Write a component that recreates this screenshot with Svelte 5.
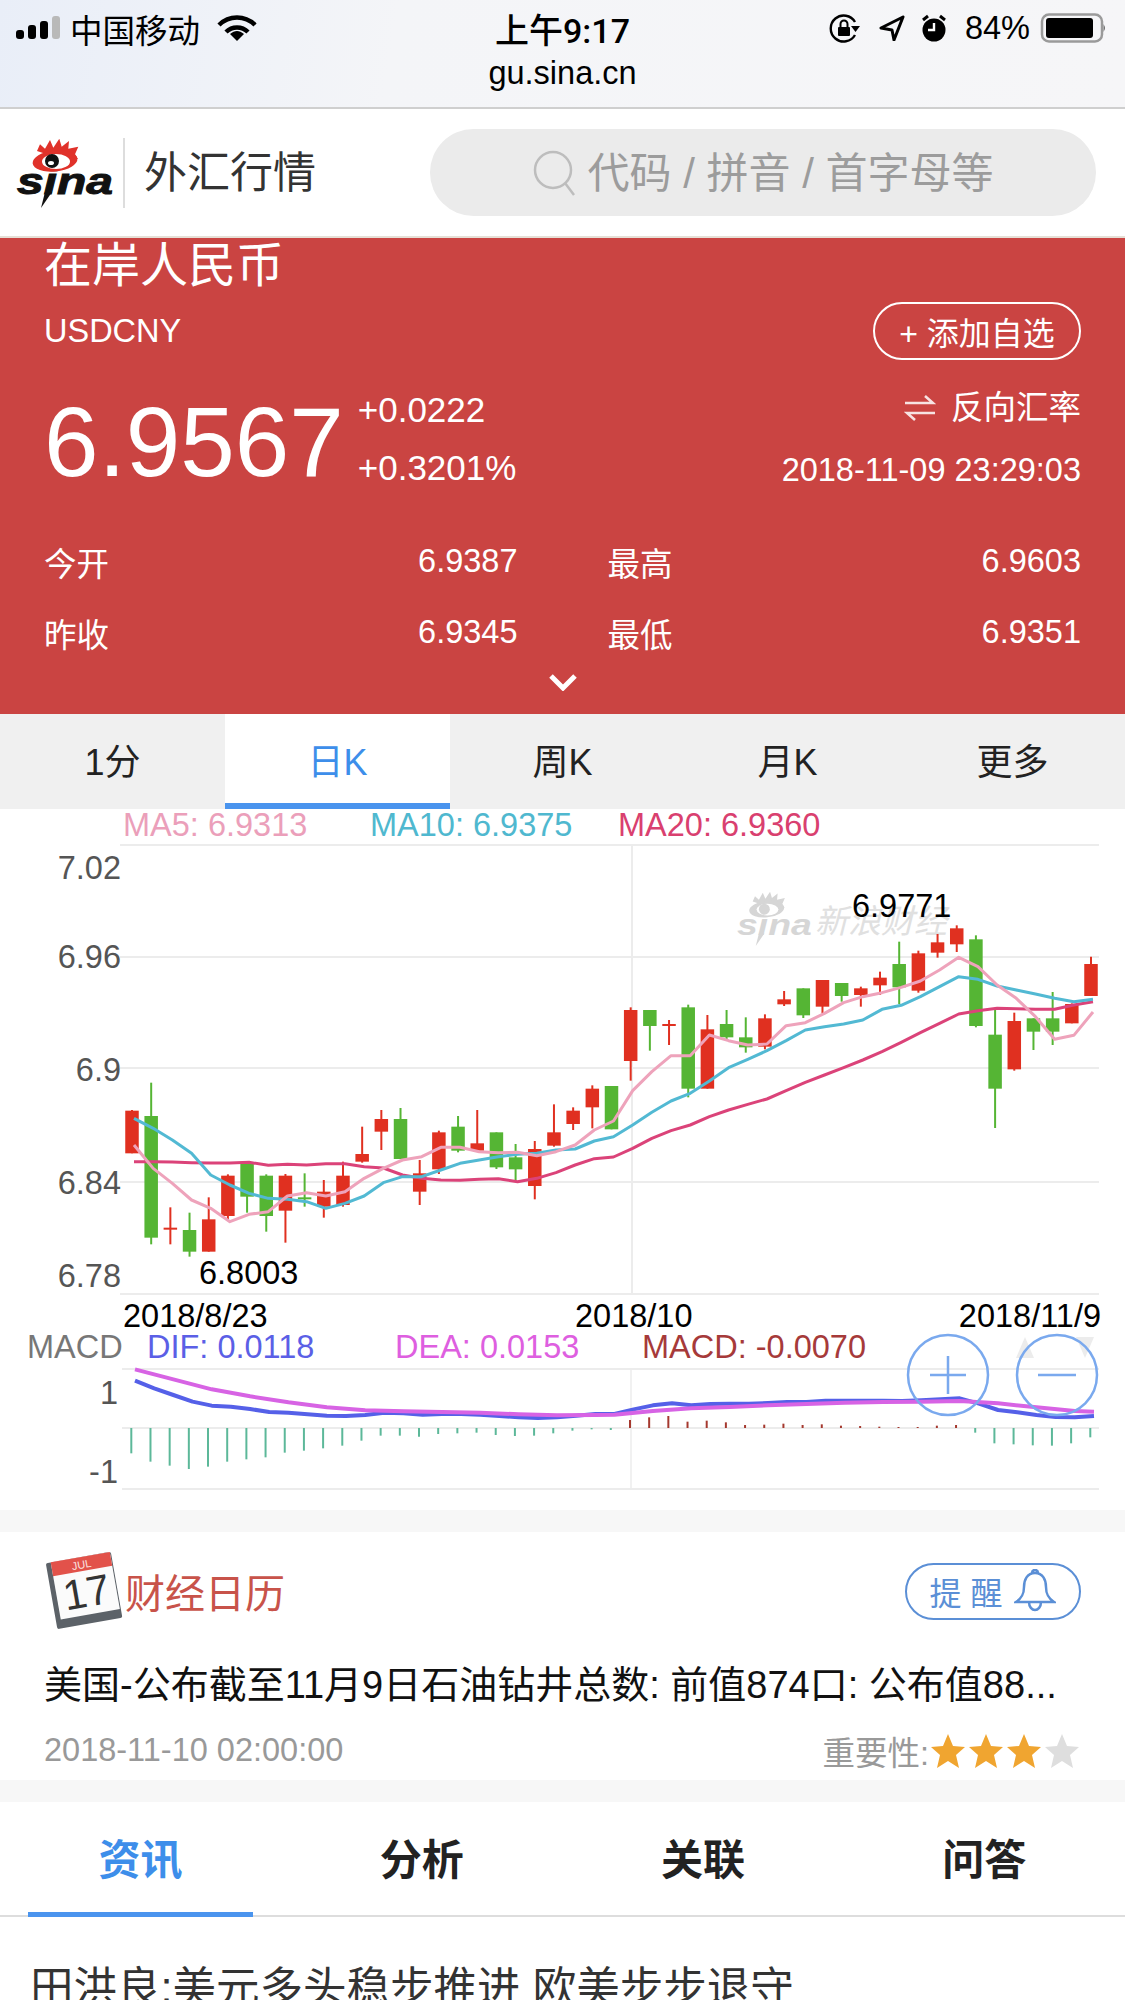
<script>
	// chart data: y values are in third-pixels, counted from the chart origin
	const kTop = 800;
	const macdTop = 1300;
	const x0 = 132;
	const step = 19.18;
	const px = (i) => x0 + step * i;
	const ky = (v) => kTop + v / 3;
	const my = (v) => macdTop + v / 3;

	// high, body top, body bottom, low, up?
	const candles = [
		[930, 932, 1060, 1060, 1], [848, 948, 1313, 1333, 0], [1222, 1283, 1289, 1333, 1], [1238, 1290, 1355, 1370, 0],
		[1192, 1258, 1355, 1355, 1], [1123, 1127, 1248, 1258, 1], [1090, 1092, 1190, 1238, 0], [1123, 1127, 1248, 1295, 0],
		[1122, 1127, 1232, 1328, 1], [1120, 1192, 1197, 1220, 0], [1140, 1175, 1220, 1253, 1], [1085, 1127, 1215, 1220, 1],
		[980, 1062, 1085, 1088, 1], [930, 957, 995, 1050, 1], [924, 957, 1077, 1077, 0], [1080, 1120, 1175, 1215, 1],
		[992, 997, 1108, 1122, 1], [948, 980, 1052, 1057, 0], [930, 1030, 1052, 1052, 1], [997, 997, 1102, 1107, 0],
		[1032, 1072, 1108, 1140, 0], [1023, 1047, 1158, 1198, 1], [913, 997, 1037, 1040, 1], [922, 932, 972, 990, 1],
		[856, 866, 922, 985, 1], [858, 858, 988, 988, 0], [622, 630, 783, 842, 1], [630, 630, 678, 752, 0],
		[660, 672, 678, 735, 1], [614, 622, 866, 892, 0], [645, 688, 866, 866, 1], [630, 672, 712, 722, 0],
		[652, 712, 742, 758, 0], [643, 655, 740, 748, 1], [573, 598, 613, 618, 1], [565, 565, 646, 654, 0],
		[540, 540, 620, 640, 1], [549, 549, 588, 605, 0], [560, 565, 585, 620, 1], [515, 533, 556, 585, 1],
		[425, 492, 562, 612, 0], [452, 460, 572, 578, 1], [402, 427, 458, 473, 1], [376, 385, 433, 456, 1],
		[406, 418, 678, 682, 0], [625, 704, 866, 984, 0], [638, 663, 808, 812, 1], [655, 655, 695, 750, 0],
		[576, 655, 695, 735, 0], [610, 612, 670, 670, 1], [470, 492, 588, 588, 1]
	];

	const ma5 = [1035, 1105, 1150, 1200, 1225, 1265, 1243, 1235, 1188, 1178, 1188, 1175, 1135, 1105, 1080, 1070, 1042, 1042, 1055, 1058, 1057, 1067, 1055, 1035, 990, 963, 872, 815, 767, 767, 705, 722, 735, 732, 677, 668, 640, 608, 590, 578, 562, 543, 510, 472, 500, 555, 595, 650, 718, 706, 636];
	const ma10 = [955, 985, 1020, 1060, 1125, 1155, 1180, 1195, 1198, 1205, 1225, 1210, 1188, 1148, 1130, 1130, 1110, 1090, 1080, 1070, 1063, 1060, 1050, 1047, 1023, 1010, 975, 937, 903, 880, 843, 803, 778, 752, 722, 690, 680, 672, 660, 628, 616, 590, 560, 530, 538, 558, 570, 582, 595, 605, 598];
	const ma20 = [1085, 1085, 1086, 1088, 1089, 1089, 1087, 1096, 1093, 1095, 1091, 1091, 1100, 1104, 1125, 1135, 1140, 1141, 1138, 1136, 1145, 1135, 1118, 1095, 1076, 1071, 1045, 1015, 992, 975, 950, 930, 913, 897, 872, 847, 825, 803, 780, 755, 727, 698, 670, 642, 632, 625, 626, 628, 628, 615, 605];

	const dif = [242, 265, 285, 305, 317, 320, 327, 336, 338, 343, 347, 348, 345, 338, 340, 344, 342, 342, 344, 348, 352, 354, 352, 347, 342, 342, 328, 316, 310, 316, 312, 311, 311, 309, 306, 306, 302, 302, 302, 302, 303, 301, 298, 295, 311, 330, 337, 345, 351, 352, 348];
	const dea = [[0, 208], [2, 238], [4, 268], [6, 289], [8, 307], [10, 322], [12, 331], [14, 334], [16, 336], [18, 338], [20, 343], [22, 346], [24, 345], [25, 344], [27, 333], [29, 325], [31, 321], [33, 316], [35, 312], [37, 308], [39, 306], [41, 305], [43, 303], [45, 310], [47, 322], [49, 333], [50, 335]];
	const macdBars = [460, 485, 497, 507, 500, 485, 478, 472, 458, 452, 445, 437, 422, 407, 407, 410, 402, 400, 398, 405, 408, 407, 400, 392, 388, 390, 360, 352, 348, 365, 362, 367, 375, 374, 371, 375, 373, 377, 378, 380, 381, 381, 377, 375, 398, 430, 433, 436, 437, 430, 412];
	const macdZero = 384;

	const linePoints = (ys) => ys.map((v, i) => `${px(i) + 2},${ky(v)}`).join(' ');
	const difPoints = dif.map((v, i) => `${px(i) + 3},${my(v)}`).join(' ');
	const deaPoints = dea.map(([i, v]) => `${px(i) + 3},${my(v)}`).join(' ');

	const gridY = [845, 957, 1068, 1182, 1294];
	const priceLabels = [['7.02', 868], ['6.96', 957], ['6.9', 1070], ['6.84', 1183], ['6.78', 1276]];
	const periods = ['1分', '日K', '周K', '月K', '更多'];
	const infoTabs = ['资讯', '分析', '关联', '问答'];
	const stats = [
		['今开', '6.9387'], ['最高', '6.9603'],
		['昨收', '6.9345'], ['最低', '6.9351']
	];
	const star = 'M18 1l5 12 12 1-9 8 3 13-11-7-11 7 3-13-9-8 12-1z';
	const flames = 'M22 14L25 7.300L30 11.700L35 3L38.300 10.700L44.300 1.700L46.700 9.700L54 4L53.300 11.700L63.300 9.700L60 17.300L63 22L40 20Z';
</script>

<div class="page">
	<div class="status">
		<div class="status-top">
			<div class="status-left">
				<svg class="signal" width="44" height="24" viewBox="0 0 44 24">
					<rect x="0" y="14" width="8" height="9" rx="3" />
					<rect x="12" y="9" width="8" height="14" rx="3" />
					<rect x="24" y="5" width="8" height="18" rx="3" />
					<rect x="36" y="0" width="8" height="23" rx="3" fill="#b9b9b9" />
				</svg>
				<span>中国移动</span>
				<svg class="wifi" width="42" height="28" viewBox="0 0 42 28">
					<path d="M3 11C13 1 29 1 39 11M10 18C16 12 26 12 32 18" fill="none" stroke="#000" stroke-width="4.5" />
					<path d="M21 27L14 20C19 16 23 16 28 20Z" />
				</svg>
			</div>
			<div class="status-time">上午9:17</div>
			<div class="status-right">
				<svg width="32" height="30" viewBox="0 0 32 30">
					<path d="M26 22A13 13 0 1 1 26 9" fill="none" stroke="#000" stroke-width="2.4" />
					<path d="M22 13h9l-4.500 6z" />
					<rect x="9" y="14" width="12" height="9" rx="1" />
					<path d="M11.500 14v-3a3.500 3.500 0 0 1 7 0v3" fill="none" stroke="#000" stroke-width="2" />
				</svg>
				<svg class="arrow" width="26" height="26" viewBox="0 0 26 26">
					<path d="M24 2L2 13l11 2 2 10z" fill="none" stroke="#000" stroke-width="3" stroke-linejoin="round" />
				</svg>
				<svg class="alarm" width="26" height="28" viewBox="0 0 26 28">
					<circle cx="13" cy="16" r="11.500" />
					<path d="M2 6l5-4M24 6l-5-4" stroke="#000" stroke-width="3" />
					<path d="M13 9v7h-6" fill="none" stroke="#fff" stroke-width="2.400" />
				</svg>
				<span class="battery-pct">84%</span>
				<svg width="66" height="30" viewBox="0 0 66 30">
					<rect x="3" y="1.500" width="60" height="27" rx="7" fill="none" stroke="#9a9a9a" stroke-width="2.500" />
					<rect x="7" y="5" width="47" height="20" rx="3" />
					<path d="M64.500 11l2 4-2 4z" fill="#777" />
				</svg>
			</div>
		</div>
		<div class="status-url">gu.sina.cn</div>
	</div>

	<header class="topbar">
		<svg class="logo" width="102" height="72" viewBox="0 0 102 72">
			<text x="2" y="57" class="logo-text" textLength="96" lengthAdjust="spacingAndGlyphs">sina</text>
			<path d="M30 55h7L26 71z" fill="#111" />
			<path d={flames} fill="#e0322a" />
			<ellipse cx="40" cy="24" rx="22.500" ry="10.500" transform="rotate(-6 40 24)" fill="#e0322a" />
			<ellipse cx="41" cy="24.500" rx="14" ry="7.500" fill="#fff" />
			<circle cx="37" cy="24" r="7" fill="#111" />
			<ellipse cx="36" cy="26" rx="3" ry="2" fill="#fff" />
		</svg>
		<div class="topbar-title">外汇行情</div>
		<div class="search">
			<svg width="46" height="48" viewBox="0 0 46 48">
				<circle cx="21" cy="21" r="18" fill="none" stroke="#bdbdbd" stroke-width="2.500" />
				<path d="M33 34l9 12" stroke="#bdbdbd" stroke-width="2.500" />
			</svg>
			<span>代码 / 拼音 / 首字母等</span>
		</div>
	</header>

	<section class="quote">
		<div class="quote-name">在岸人民币</div>
		<div class="quote-symbol-row">
			<span>USDCNY</span>
			<button class="add-btn" type="button">+ 添加自选</button>
		</div>
		<div class="quote-price-row">
			<div class="price">6.9567</div>
			<div class="change">
				<div>+0.0222</div>
				<div>+0.3201%</div>
			</div>
			<div class="quote-right">
				<div class="reverse">
					<svg width="32" height="28" viewBox="0 0 32 28">
						<path d="M1 9h28l-8-7M31 19H3l8 7" fill="none" stroke="#fff" stroke-width="2.600" opacity=".85" />
					</svg>
					<span>反向汇率</span>
				</div>
				<div>2018-11-09 23:29:03</div>
			</div>
		</div>
		<div class="stats">
			{#each stats as [label, value]}
				<div class="stat"><span>{label}</span><span>{value}</span></div>
			{/each}
		</div>
		<svg class="chevron" width="30" height="18" viewBox="0 0 30 18">
			<path d="M3 3l12 12L27 3" fill="none" stroke="#fff" stroke-width="5" />
		</svg>
	</section>

	<nav class="periods">
		{#each periods as p, i}
			<div class="period" class:active={i === 1}>{p}</div>
		{/each}
	</nav>

	<svg class="chart" width="1125" height="701" viewBox="0 809 1125 701">
		{#each gridY as y}
			<line x1="120" x2="1099" y1={y} y2={y} class="grid" />
		{/each}
		<line x1="632" x2="632" y1="845" y2="1294" class="grid" />

		<text x="123" y="836" fill="#eb9fba">MA5: 6.9313</text>
		<text x="370" y="836" fill="#4fb8cf">MA10: 6.9375</text>
		<text x="618" y="836" fill="#d9406f">MA20: 6.9360</text>

		{#each priceLabels as [label, y]}
			<text x="121" y={y + 11} text-anchor="end" fill="#555">{label}</text>
		{/each}

		<g class="watermark" transform="translate(735.500 890.500) scale(.78)">
			<text x="2" y="57" class="wm-logo" textLength="96" lengthAdjust="spacingAndGlyphs">sina</text>
			<path d="M30 55h7L26 71z" />
			<path d={flames} />
			<ellipse cx="40" cy="24" rx="22.500" ry="10.500" transform="rotate(-6 40 24)" />
			<ellipse cx="41" cy="24.500" rx="14" ry="7.500" fill="#fff" />
			<circle cx="37" cy="24" r="7" />
		</g>
		<text x="815" y="933" class="wm-text">新浪财经</text>

		{#each candles as [high, top, bottom, low, up], i}
			<line x1={px(i)} x2={px(i)} y1={ky(high)} y2={ky(low)} class="wick" stroke={up ? '#e03020' : '#55b534'} />
			<rect x={px(i) - 6.75} y={ky(top)} width="13.5" height={Math.max((bottom - top) / 3, 2)} fill={up ? '#e03020' : '#55b534'} />
		{/each}

		<polyline points={linePoints(ma20)} class="ma" stroke="#db4379" />
		<polyline points={linePoints(ma10)} class="ma" stroke="#52b9d3" />
		<polyline points={linePoints(ma5)} class="ma" stroke="#eea3bb" />

		<text x="852" y="917" fill="#000">6.9771</text>
		<text x="199" y="1284" fill="#000">6.8003</text>

		<text x="123" y="1327" fill="#000">2018/8/23</text>
		<text x="575" y="1327" fill="#000">2018/10</text>
		<text x="1101" y="1327" fill="#000" text-anchor="end">2018/11/9</text>

		<text x="27" y="1358" fill="#777">MACD</text>
		<text x="147" y="1358" fill="#5b5fe6">DIF: 0.0118</text>
		<text x="395" y="1358" fill="#de5fe0">DEA: 0.0153</text>
		<text x="642" y="1358" fill="#a63a3a">MACD: -0.0070</text>

		<line x1="122" x2="1099" y1="1369" y2="1369" class="grid" />
		<line x1="122" x2="1099" y1="1428" y2="1428" class="grid" />
		<line x1="122" x2="1099" y1="1489" y2="1489" class="grid" />
		<line x1="631" x2="631" y1="1369" y2="1489" class="grid thin" />

		<text x="118" y="1404" text-anchor="end" fill="#555">1</text>
		<text x="118" y="1483" text-anchor="end" fill="#555">-1</text>

		{#each macdBars as v, i}
			<line x1={px(i) - 0.7} x2={px(i) - 0.7} y1={my(macdZero)} y2={my(v)} stroke={v > macdZero ? '#5cb899' : '#a5392f'} stroke-width="2" />
		{/each}

		<polyline points={difPoints} class="ma macd-line" stroke="#5560e8" />
		<polyline points={deaPoints} class="ma macd-line" stroke="#d763e4" />

		<path d="M1025 1337l9 21h-18zM1085 1358l-9-21h18z" fill="#ececec" />
		<g class="zoom-btn">
			<circle cx="948" cy="1375" r="40" />
			<path d="M930 1375h36M948 1356v38" />
			<circle cx="1057" cy="1375" r="40" />
			<path d="M1038 1375h38" />
		</g>
	</svg>

	<div class="gap"></div>

	<section class="calendar">
		<div class="cal-head">
			<div class="cal-title">
				<svg width="78" height="80" viewBox="0 0 78 80">
					<g transform="rotate(-10 38 39)">
						<rect x="5" y="6" width="66" height="67" rx="2" fill="#5c6268" />
						<rect x="10" y="6" width="60" height="58" fill="#fbfbfb" />
						<rect x="10" y="6" width="60" height="14" fill="#e2524a" />
						<text x="40" y="17.500" class="cal-month">JUL</text>
						<text x="40" y="56" class="cal-day">17</text>
					</g>
				</svg>
				<span>财经日历</span>
			</div>
			<button class="remind" type="button">
				<span>提 醒</span>
				<svg width="42" height="44" viewBox="0 0 42 44">
					<path d="M21 4c-8 0-11 7-11 14 0 7-2 11-8 15h38c-6-4-8-8-8-15 0-7-3-14-11-14zM15 33c0 5 3 8 6 8s6-3 6-8M18 4c0-4 6-4 6 0" fill="none" stroke="#5b8fd6" stroke-width="2.500" />
				</svg>
			</button>
		</div>
		<div class="cal-event">美国-公布截至11月9日石油钻井总数: 前值874口: 公布值88...</div>
		<div class="cal-foot">
			<span class="cal-time">2018-11-10 02:00:00</span>
			<div class="importance">
				<span>重要性:</span>
				{#each [1, 1, 1, 0] as on}
					<svg width="38" height="36" viewBox="0 0 36 36"><path d={star} fill={on ? '#f0a530' : '#dedede'} /></svg>
				{/each}
			</div>
		</div>
	</section>

	<div class="gap"></div>

	<nav class="info-tabs">
		{#each infoTabs as t, i}
			<div class="info-tab" class:active={i === 0}>{t}</div>
		{/each}
	</nav>

	<div class="headline">田洪良:美元多头稳步推进 欧美步步退守</div>
</div>

<style>
	:global(body) {
		margin: 0;
		background: #fff;
	}

	.page {
		width: 1125px;
		height: 2000px;
		overflow: hidden;
		font-family: "Liberation Sans", "Noto Sans CJK SC", sans-serif;
		font-size: 32.5px;
		color: #000;
	}

	.status {
		height: 107px;
		background: linear-gradient(100deg, #e9eef8 0%, #f4f5f8 35%, #f6f6f8 100%);
		border-bottom: 2px solid #cfcfcf;
	}

	.status-top {
		display: grid;
		grid-template-columns: 1fr auto 1fr;
		align-items: center;
		height: 56px;
		padding: 0 20px 0 16px;
	}

	.status-left {
		display: flex;
		align-items: center;
		gap: 10px;
	}

	.wifi {
		margin-left: 6px;
	}

	.status-time {
		font-family: Roboto, "Noto Sans CJK SC", sans-serif;
		font-weight: 500;
		font-size: 34px;
		margin-left: 4px;
	}

	.status-right {
		display: flex;
		align-items: center;
		justify-content: flex-end;
		gap: 9px;
	}

	.arrow {
		margin-left: 9px;
	}

	.alarm {
		margin-left: 7px;
		margin-right: 9px;
	}

	.status-url {
		text-align: center;
		line-height: 34px;
	}

	.topbar {
		display: flex;
		align-items: center;
		height: 127px;
		padding: 0 29px 0 15px;
		border-bottom: 2px solid #e6dfd6;
	}

	.logo {
		margin-right: 6px;
	}

	.logo-text {
		font: italic bold 37px "Liberation Sans", sans-serif;
		fill: #111;
		stroke: #111;
		stroke-width: 1;
	}

	.topbar-title {
		font-size: 43px;
		color: #333;
		padding-left: 19px;
		border-left: 2px solid #ddd;
		line-height: 70px;
		width: 307px;
		box-sizing: border-box;
	}

	.search {
		flex: 1;
		display: flex;
		align-items: center;
		justify-content: center;
		gap: 9px;
		height: 87px;
		border-radius: 44px;
		background: #ebebeb;
		color: #9c9c9c;
		font-size: 42px;
	}

	.search span {
		margin-bottom: 6px;
	}

	.quote {
		box-sizing: border-box;
		height: 476px;
		padding: 0 44px;
		background: #ca4442;
		color: #fff;
		overflow: hidden;
	}

	.quote-name {
		font-size: 48px;
		line-height: 54px;
		padding-top: 1px;
		margin-bottom: -1px;
	}

	.quote-symbol-row {
		display: flex;
		justify-content: space-between;
		align-items: center;
		height: 58px;
		margin-top: 10px;
	}

	.add-btn {
		box-sizing: border-box;
		width: 208px;
		height: 58px;
		padding: 0;
		border: 2.5px solid #fff;
		border-radius: 29px;
		background: none;
		color: #fff;
		font: inherit;
		font-size: 32px;
	}

	.quote-price-row {
		display: flex;
		align-items: center;
		margin-top: 21px;
		height: 116px;
	}

	.price {
		font-size: 98px;
		line-height: 116px;
		margin-right: 14px;
		padding-top: 3px;
		margin-bottom: -3px;
	}

	.change {
		font-size: 35px;
		line-height: 58px;
	}

	.quote-right {
		margin-left: auto;
		text-align: right;
		line-height: 62px;
	}

	.reverse {
		display: flex;
		justify-content: flex-end;
		align-items: center;
		gap: 15px;
	}

	.stats {
		display: grid;
		grid-template-columns: 1fr 1fr;
		column-gap: 90px;
		margin-top: 28px;
	}

	.stat {
		display: flex;
		justify-content: space-between;
		align-items: center;
		height: 72px;
		margin-bottom: -1px;
	}

	.chevron {
		display: block;
		margin: 6px auto 0;
	}

	.periods {
		display: grid;
		grid-template-columns: repeat(5, 1fr);
		height: 95px;
		background: #f0f0f0;
	}

	.period {
		box-sizing: border-box;
		display: flex;
		align-items: center;
		justify-content: center;
		font-size: 36px;
		color: #222;
		padding-bottom: 6px;
	}

	.period.active {
		background: #fff;
		color: #3d8eea;
		border-bottom: 6px solid #4a94ee;
		padding-bottom: 0;
	}

	.chart {
		display: block;
		overflow: visible;
		font-size: 32.5px;
	}

	.grid {
		stroke: #ececec;
		stroke-width: 2;
	}

	.grid.thin {
		stroke-width: 1.5;
	}

	.wick {
		stroke-width: 2;
	}

	.ma {
		fill: none;
		stroke-width: 3;
		stroke-linejoin: round;
	}

	.macd-line {
		stroke-width: 4;
	}

	.watermark {
		fill: #d6d6d6;
	}

	.watermark .wm-logo {
		font: italic bold 37px "Liberation Sans", sans-serif;
	}

	.wm-text {
		font-size: 33px;
		font-style: italic;
		fill: #e0e0e0;
	}

	.zoom-btn {
		fill: none;
		stroke: #7aa9ee;
		stroke-width: 2.5;
	}

	.gap {
		height: 22px;
		background: #f7f7f7;
	}

	.calendar {
		box-sizing: border-box;
		height: 248px;
		padding: 17px 44px 0;
	}

	.cal-head {
		display: flex;
		justify-content: space-between;
		align-items: center;
		height: 84px;
	}

	.cal-title {
		display: flex;
		align-items: center;
		gap: 2px;
		font-size: 40px;
		color: #c8534a;
	}

	.cal-title svg {
		margin-left: 2px;
		margin-right: -1px;
	}

	.cal-month {
		font-size: 11px;
		fill: #fbe3e0;
		text-anchor: middle;
	}

	.cal-day {
		font-size: 42px;
		fill: #333;
		text-anchor: middle;
	}

	.remind {
		box-sizing: border-box;
		display: flex;
		align-items: center;
		justify-content: center;
		gap: 12px;
		width: 176px;
		height: 57px;
		padding: 0;
		border: 2.5px solid #5b8fd6;
		border-radius: 29px;
		background: none;
		color: #5b8fd6;
		font: inherit;
		font-size: 32px;
	}

	.cal-event {
		margin-top: 30px;
		font-size: 38px;
		line-height: 44px;
		color: #111;
		white-space: nowrap;
	}

	.cal-foot {
		display: flex;
		justify-content: space-between;
		align-items: center;
		margin-top: 20px;
		color: #999;
	}

	.importance {
		display: flex;
		align-items: center;
	}

	.info-tabs {
		display: grid;
		grid-template-columns: repeat(4, 1fr);
		height: 115px;
		border-bottom: 2px solid #ddd;
		box-sizing: border-box;
	}

	.info-tab {
		display: flex;
		align-items: center;
		justify-content: center;
		position: relative;
		font-size: 42px;
		font-weight: 700;
		color: #222;
		padding-bottom: 5px;
	}

	.info-tab.active {
		color: #3d8eea;
	}

	.info-tab.active::after {
		content: '';
		position: absolute;
		left: 28px;
		width: 225px;
		bottom: -2px;
		height: 5px;
		background: #4a94ee;
	}

	.headline {
		margin: 46px 0 0 30px;
		font-size: 43.5px;
		line-height: 50px;
		color: #333;
		white-space: nowrap;
	}
</style>
